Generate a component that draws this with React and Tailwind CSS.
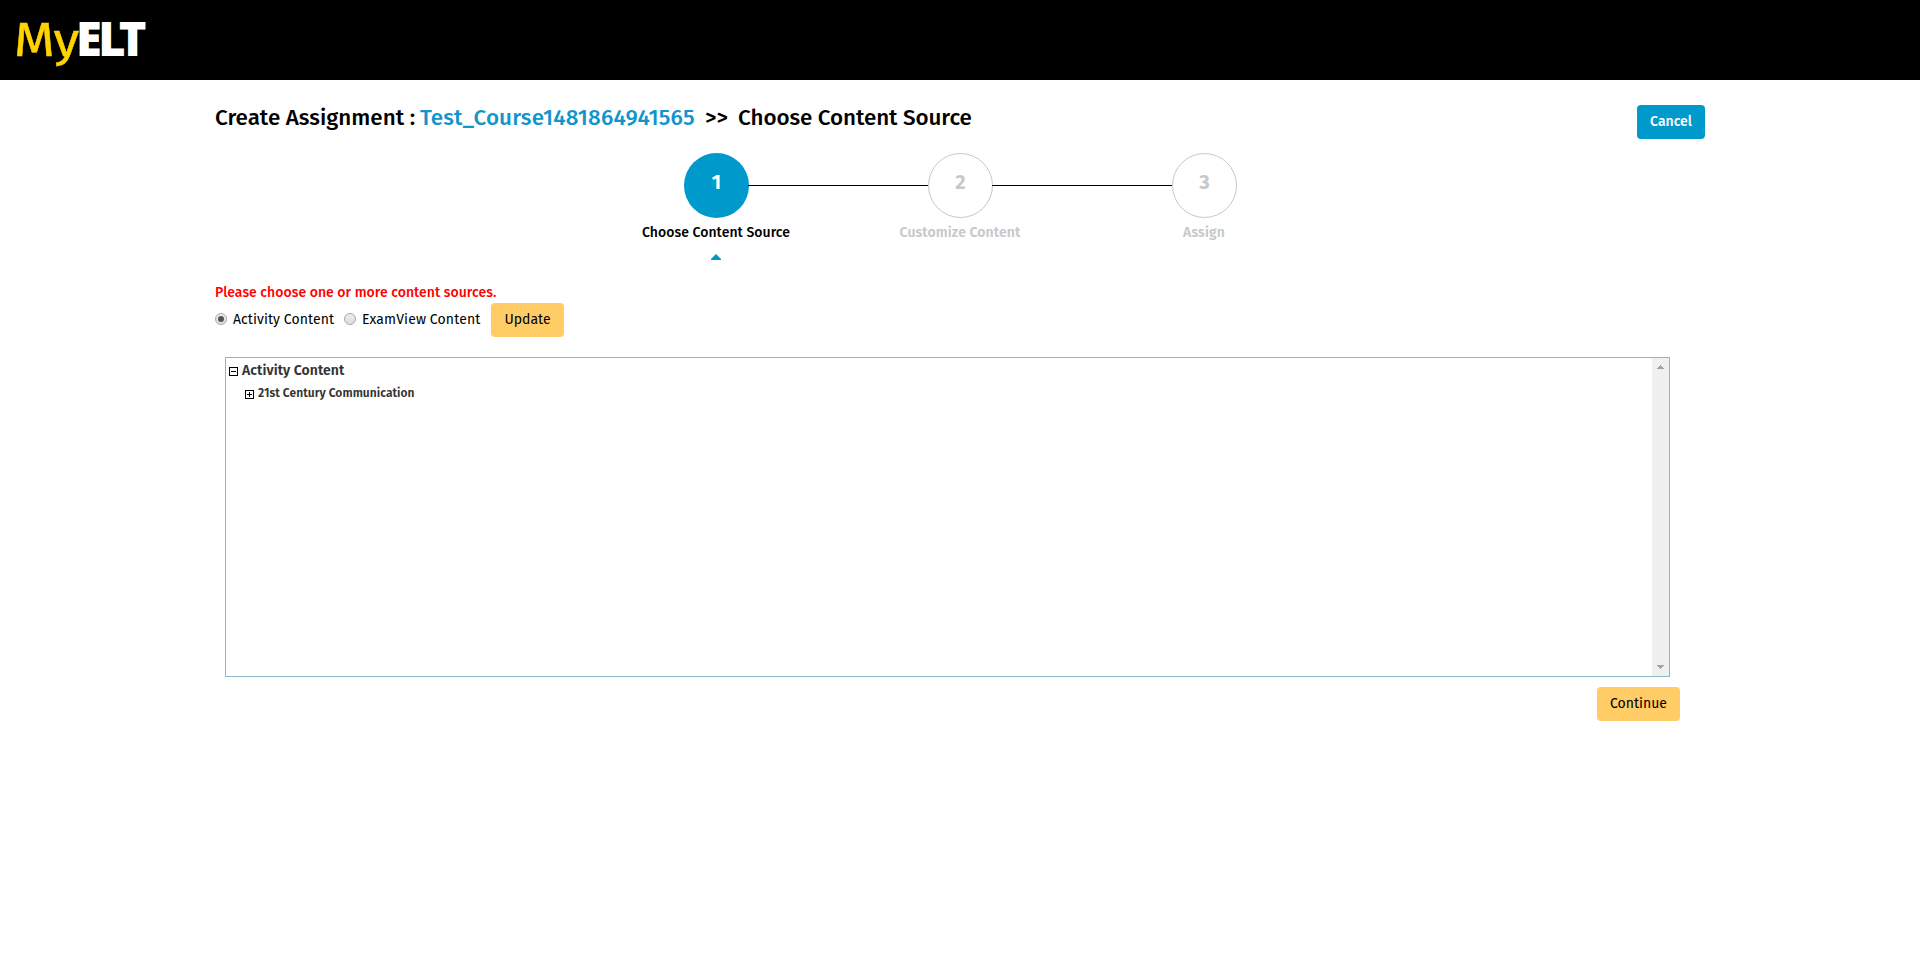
import React from "react";

function Step({ number, label, active }) {
  return (
    <div className="flex w-[244px] flex-col items-center">
      <div
        className={
          active
            ? "flex h-[65px] w-[65px] justify-center rounded-full bg-[#0099cc] pt-[14px] pl-px text-[20px] leading-[30px] font-bold text-white"
            : "flex h-[65px] w-[65px] justify-center rounded-full border border-[#c8c8c8] bg-white pt-[13px] pl-px text-[20px] leading-[30px] font-bold text-[#c8c8c8]"
        }
      >
        {number}
      </div>
      <div
        className={
          active
            ? "mt-[5px] text-[14px] leading-5 font-medium tracking-[0.05px] text-black"
            : "mt-[5px] text-[14px] leading-5 font-semibold tracking-[0.1px] text-[#c8c8c8]"
        }
      >
        {label}
      </div>
      {active && (
        <svg className="mt-[11px] h-[6px] w-[10px]" viewBox="0 0 10 6">
          <path d="M0 6V5L5 0L10 5V6Z" fill="#0099cc" />
        </svg>
      )}
    </div>
  );
}

function Radio({ checked }) {
  return (
    <span className="-mt-[2px] flex h-3 w-3 items-center justify-center rounded-full border border-[#a9a9a9] bg-linear-to-b from-[#eeeeee] to-[#dcdcdc]">
      {checked && <span className="h-[6px] w-[6px] rounded-full bg-[#555555]" />}
    </span>
  );
}

function TreeToggle({ collapsed }) {
  return (
    <svg className="h-[9px] w-[9px]" viewBox="0 0 9 9" shapeRendering="crispEdges">
      <rect x="0.5" y="0.5" width="8" height="8" fill="#fff" stroke="#000" />
      <path d={collapsed ? "M2 4.5H7M4.5 2V7" : "M2 4.5H7"} stroke="#000" />
    </svg>
  );
}

export default function App() {
  return (
    <div className="flex h-[974px] flex-col bg-white font-['Fira_Sans','Open_Sans',sans-serif] text-black">
      <header className="flex h-20 items-start bg-black pt-[9px] pl-[14px] leading-[58px]">
        <span className="mt-[2px] w-[62px] origin-left scale-x-[1.09] text-[48px] tracking-[-1px] text-[#ffd200] [-webkit-text-stroke:0.5px_#ffd200]">
          My
        </span>
        <span className="font-['Open_Sans',sans-serif] text-[47px] font-extrabold tracking-[-3.5px] text-white">
          E<span className="tracking-[-7px]">L</span>T
        </span>
      </header>

      <main className="flex w-[1705px] flex-col pl-[215px]">
        <div className="flex h-[73px] items-start justify-between">
          <h1 className="flex pt-[23px] text-[22.4px] leading-[30px] font-medium">
            <span className="w-[205px]">Create Assignment :</span>
            <span className="w-[285px] tracking-[0.15px] text-[#1294cc]">Test_Course1481864941565</span>
            <span className="w-[33px]">&gt;&gt;</span>
            <span className="tracking-[-0.06px]">Choose Content Source</span>
          </h1>
          <button className="mt-[25px] flex h-[34px] w-[68px] justify-center rounded-[4px] bg-[#0099cc] pt-[7px] text-[14px] leading-5 font-medium text-white">
            Cancel
          </button>
        </div>

        <div className="flex h-[128px] pl-[379px]">
          <Step number="1" label="Choose Content Source" active />
          <div className="-mx-[90px] mt-8 h-px w-[180px] bg-black" />
          <Step number="2" label="Customize Content" />
          <div className="-mx-[90px] mt-8 h-px w-[180px] bg-black" />
          <Step number="3" label="Assign" />
        </div>

        <p className="mt-[2px] h-5 text-[14px] leading-5 font-medium tracking-[0.04px] text-[#ff0000]">
          Please choose one or more content sources.
        </p>
        <div className="flex h-[34px] items-center text-[14px] leading-5">
          <div className="flex w-[129px] items-center gap-[6px] tracking-[0.08px]">
            <Radio checked />
            <span>Activity Content</span>
          </div>
          <div className="flex w-[147px] items-center gap-[6px] tracking-[0.12px]">
            <Radio />
            <span>ExamView Content</span>
          </div>
          <button className="flex h-[34px] w-[73px] justify-center rounded-[4px] bg-[#ffcc66] pt-[7px]">
            Update
          </button>
        </div>

        <section className="mt-5 ml-[10px] flex h-[320px] w-[1445px] justify-between border border-[#87b9c8]">
          <div className="flex flex-col pl-[3px] text-[#333333]">
            <div className="flex h-[27px] items-center gap-[4px] text-[14px] leading-5 font-semibold tracking-[0.07px]">
              <TreeToggle />
              <span className="-mt-[1px]">Activity Content</span>
            </div>
            <div className="flex h-[19px] items-center gap-[4px] pl-4 text-[12px] leading-5 font-semibold tracking-[0.05px]">
              <TreeToggle collapsed />
              <span className="-mt-[3px]">21st Century Communication</span>
            </div>
          </div>
          <div className="flex w-[17px] flex-col items-center justify-between bg-[#f0f0f0] py-[7px]">
            <svg className="h-1 w-[7px]" viewBox="0 0 7 4" shapeRendering="crispEdges">
              <path d="M0 4V3H1V2H2V1H3V0H4V1H5V2H6V3H7V4Z" fill="#a3a3a3" />
            </svg>
            <svg className="h-1 w-[7px]" viewBox="0 0 7 4" shapeRendering="crispEdges">
              <path d="M0 0V1H1V2H2V3H3V4H4V3H5V2H6V1H7V0Z" fill="#a3a3a3" />
            </svg>
          </div>
        </section>
        <button className="mt-[10px] mr-[25px] flex h-[34px] w-[83px] justify-center self-end rounded-[4px] bg-[#ffcc66] pt-[7px] text-[14px] leading-5">
          Continue
        </button>
      </main>
    </div>
  );
}
